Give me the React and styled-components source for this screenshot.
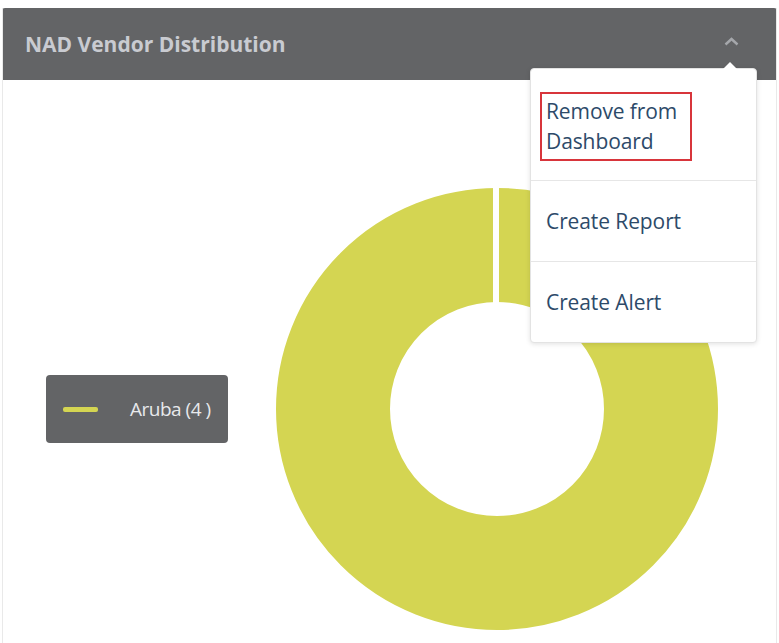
import React from "react";
import styled, { createGlobalStyle } from "styled-components";

const Global = createGlobalStyle`
  html, body { margin: 0; padding: 0; background: #ffffff; }
  body { font-family: "Open Sans", "Noto Sans", sans-serif; }
`;

const Panel = styled.div`
  position: relative;
  margin: 8px 2px 0 2px;
  height: 635px;
  box-sizing: border-box;
  border-left: 1px solid #e9e9e9;
  border-right: 1px solid #e9e9e9;
  overflow: hidden;
`;

const Header = styled.div`
  height: 72px;
  margin: 0 -1px;
  background: #636466;
  border-radius: 3px 3px 0 0;
  display: flex;
  align-items: center;
  justify-content: space-between;
  padding: 0 38px 0 23px;
  box-sizing: border-box;
`;

const Title = styled.h2`
  margin: 0;
  font-size: 21px;
  font-weight: 700;
  color: #c9cbd1;
  letter-spacing: 0;
  margin-top: -1px;
`;

const Chevron = styled.svg`
  width: 15px;
  height: 9px;
  margin-top: -6px;
`;

const Body = styled.div`
  display: flex;
  align-items: center;
  padding: 108px 0 0 43px;
`;

const Legend = styled.div`
  width: 182px;
  height: 68px;
  box-sizing: border-box;
  background: #636466;
  border-radius: 4px;
  display: flex;
  align-items: center;
  padding: 0 0 0 17px;
  gap: 32px;
`;

const Swatch = styled.span`
  width: 35px;
  height: 5px;
  border-radius: 2px;
  background: ${(p) => p.color};
`;

const LegendLabel = styled.span`
  font-size: 19px;
  color: #e8e9ec;
  letter-spacing: -0.5px;
`;

const Donut = styled.svg`
  margin-left: 48px;
  width: 442px;
  height: 442px;
  flex: none;
`;

const Menu = styled.div`
  position: absolute;
  top: 60px;
  right: 19px;
  width: 227px;
  background: #fff;
  border: 1px solid #e3e3e3;
  border-radius: 4px;
  box-shadow: 0 1px 5px rgba(0, 0, 0, 0.12);
  box-sizing: border-box;

  &::before {
    content: "";
    position: absolute;
    top: -7px;
    right: 19px;
    border-left: 7px solid transparent;
    border-right: 7px solid transparent;
    border-bottom: 7px solid #fff;
  }
`;

const MenuItem = styled.div`
  padding: ${(p) => (p.$first ? "23px 9px 19px" : "25px 15px")};
  font-size: 21px;
  line-height: 30px;
  color: #2d4a69;
  letter-spacing: -0.1px;
  border-top: ${(p) => (p.$first ? "none" : "1px solid #e6e6e6")};
`;

const Highlight = styled.div`
  display: inline-block;
  padding: 2px 13px 3px 4px;
  border: 2px solid #d8353b;
`;

export default function App() {
  const cx = 221;
  const cy = 221;
  const r = 164;
  return (
    <>
      <Global />
      <Panel>
        <Header>
          <Title>NAD Vendor Distribution</Title>
          <Chevron viewBox="0 0 15 9">
            <path d="M1.5 7.5 L7.5 2 L13.5 7.5" fill="none" stroke="#a5a7ab" strokeWidth="2.4" />
          </Chevron>
        </Header>
        <Body>
          <Legend>
            <Swatch color="#d4d552" />
            <LegendLabel>Aruba (4 )</LegendLabel>
          </Legend>
          <Donut viewBox="0 0 442 442">
            <circle cx={cx} cy={cy} r={r} fill="none" stroke="#d4d552" strokeWidth="114" />
            <rect x={cx - 4} y={0} width={6} height={118} fill="#ffffff" />
          </Donut>
        </Body>
        <Menu>
          <MenuItem $first>
            <Highlight>
              Remove from
              <br />
              Dashboard
            </Highlight>
          </MenuItem>
          <MenuItem>Create Report</MenuItem>
          <MenuItem>Create Alert</MenuItem>
        </Menu>
      </Panel>
    </>
  );
}
